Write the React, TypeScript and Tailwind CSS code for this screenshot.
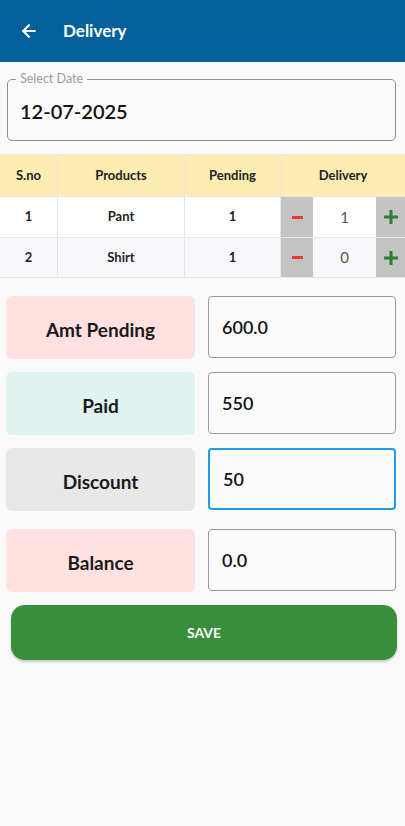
import React from 'react';
import { ArrowLeft } from 'lucide-react';

const font = { fontFamily: 'Lato, "Noto Sans", sans-serif' };

interface Item {
  sno: number;
  name: string;
  pending: number;
  delivery: number;
}

const items: Item[] = [
  { sno: 1, name: 'Pant', pending: 1, delivery: 1 },
  { sno: 2, name: 'Shirt', pending: 1, delivery: 0 },
];

const AmountRow: React.FC<{ label: string; value: string; bg: string; focused?: boolean; className?: string }> = ({
  label,
  value,
  bg,
  focused,
  className,
}) => (
  <div className={`flex gap-[13px] ${className ?? ''}`}>
    <div className={`w-[189px] h-[63px] rounded-[6px] flex items-center justify-center pt-[6px] ${bg}`}>
      <span className="text-[19px] font-bold text-[#1a1a1a]">{label}</span>
    </div>
    <div
      className={`w-[188px] h-[62px] rounded-[4px] bg-[#fbfbfb] flex items-center px-[13px] pt-[1px] ${
        focused ? 'border-2 border-[#1e9be9]' : 'border border-[#9a9a9a]'
      }`}
    >
      <span className="text-[18px] font-semibold text-[#111]">{value}</span>
    </div>
  </div>
);

export default function App() {
  return (
    <div className="w-[405px] h-[826px] bg-[#fafafa] flex flex-col" style={font}>
      <div className="h-[62px] bg-[#03609a] flex items-center px-[19px] gap-[24px] shrink-0">
        <ArrowLeft className="w-[20px] h-[20px] text-white" strokeWidth={2.5} />
        <span className="text-white text-[17px] font-bold">Delivery</span>
      </div>

      <div className="relative mt-[17px] ml-[7px] w-[389px] h-[62px] border border-[#8f8f8f] rounded-[5px] flex items-center px-[12px] pt-[2px]">
        <span className="absolute -top-[8px] left-[8px] px-[4px] bg-[#fafafa] text-[12.5px] text-[#9a9a9a] leading-[14px]">
          Select Date
        </span>
        <span className="text-[20px] font-semibold text-[#111]">12-07-2025</span>
      </div>

      <div className="mt-[13px] border-t border-[#e6e6e6]">
        <div className="grid grid-cols-[58px_127px_96px_124px] h-[41px] bg-[#ffecb3] text-[13px] font-bold text-[#222]">
          <div className="flex items-center justify-center border-r border-[#e6e6e6]">S.no</div>
          <div className="flex items-center justify-center border-r border-[#e6e6e6]">Products</div>
          <div className="flex items-center justify-center border-r border-[#e6e6e6]">Pending</div>
          <div className="flex items-center justify-center">Delivery</div>
        </div>
        {items.map((it, i) => (
          <div
            key={it.sno}
            className={`grid grid-cols-[58px_127px_96px_124px] h-[41px] border-t border-[#e6e6e6] text-[13px] font-bold text-[#222] ${
              i % 2 === 1 ? 'bg-[#f8f8fc] border-b' : 'bg-white'
            }`}
          >
            <div className="flex items-center justify-center border-r border-[#e6e6e6]">{it.sno}</div>
            <div className="flex items-center justify-center border-r border-[#e6e6e6]">{it.name}</div>
            <div className="flex items-center justify-center border-r border-[#e6e6e6]">{it.pending}</div>
            <div className="flex">
              <div className="w-[32px] bg-[#c4c4c4] flex items-center justify-center">
                <span className="block w-[11px] h-[3px] bg-[#e53935]" />
              </div>
              <div className="flex-1 flex items-center justify-center text-[15px] font-normal text-[#555]">
                {it.delivery}
              </div>
              <div className="w-[29px] bg-[#c4c4c4] flex items-center justify-center">
                <svg width="16" height="16" viewBox="0 0 16 16">
                  <path d="M8 1v14M1 8h14" stroke="#2e7d32" strokeWidth="3" />
                </svg>
              </div>
            </div>
          </div>
        ))}
      </div>

      <div className="px-[6px] mt-[18px] flex flex-col">
        <AmountRow label="Amt Pending" value="600.0" bg="bg-[#ffe1e1]" />
        <AmountRow label="Paid" value="550" bg="bg-[#dff4f0]" className="mt-[13px]" />
        <AmountRow label="Discount" value="50" bg="bg-[#e8e8e8]" focused className="mt-[13px]" />
        <AmountRow label="Balance" value="0.0" bg="bg-[#ffe1e1]" className="mt-[18px]" />
      </div>

      <button className="mt-[13px] ml-[11px] w-[386px] h-[55px] rounded-[14px] bg-[#388e3c] text-white text-[14px] font-bold shadow-[0_2px_3px_rgba(0,0,0,0.2)]">
        SAVE
      </button>
    </div>
  );
}
